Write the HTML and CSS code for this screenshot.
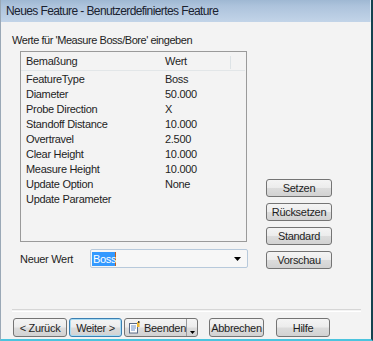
FILE: index.html
```html
<!DOCTYPE html>
<html>
<head>
<meta charset="utf-8">
<link rel="stylesheet" href="styles.css">
</head>
<body>
<div class="window">
  <div class="titlebar">Neues Feature - Benutzerdefiniertes Feature</div>
  <div class="client">
    <div class="prompt">Werte für 'Measure Boss/Bore' eingeben</div>
    <div class="main">
      <div class="left">
        <div class="listbox">
          <div class="lhead">
            <span class="c1">Bemaßung</span><span class="c2">Wert</span><span class="hdiv"></span>
          </div>
          <div class="row"><span class="c1">FeatureType</span><span class="c2">Boss</span></div>
          <div class="row"><span class="c1">Diameter</span><span class="c2">50.000</span></div>
          <div class="row"><span class="c1">Probe Direction</span><span class="c2">X</span></div>
          <div class="row"><span class="c1">Standoff Distance</span><span class="c2">10.000</span></div>
          <div class="row"><span class="c1">Overtravel</span><span class="c2">2.500</span></div>
          <div class="row"><span class="c1">Clear Height</span><span class="c2">10.000</span></div>
          <div class="row"><span class="c1">Measure Height</span><span class="c2">10.000</span></div>
          <div class="row"><span class="c1">Update Option</span><span class="c2">None</span></div>
          <div class="row"><span class="c1">Update Parameter</span><span class="c2"></span></div>
        </div>
        <div class="newval">
          <span class="nlabel">Neuer Wert</span>
          <div class="combo">
            <span class="sel">Boss</span>
            <svg class="arrow" width="7" height="4" viewBox="0 0 7 4"><path d="M0 0H7L3.5 4Z" fill="#000"/></svg>
          </div>
        </div>
      </div>
      <div class="right">
        <div class="btn side">Setzen</div>
        <div class="btn side">Rücksetzen</div>
        <div class="btn side">Standard</div>
        <div class="btn side">Vorschau</div>
      </div>
    </div>
    <div class="sep"></div>
    <div class="footer">
      <div class="btn f1">&lt; Zurück</div>
      <div class="btn f2 focus">Weiter &gt;</div>
      <div class="btn split">
        <span class="smain">
          <svg class="ico" width="13" height="13" viewBox="0 0 13 13">
            <rect x="1.5" y="2.5" width="8" height="9.5" fill="#fff" stroke="#5a6a85"/>
            <path d="M3 5h5M3 7h5M3 9h4" stroke="#6b8fc8" stroke-width="1"/>
            <rect x="9" y="1" width="2.5" height="5" fill="#f0b830"/>
            <rect x="10" y="0" width="1.5" height="2" fill="#404040"/>
          </svg>
          <span>Beenden</span>
        </span>
        <span class="sarrow"><svg width="5" height="3" viewBox="0 0 5 3"><path d="M0 0H5L2.5 3Z" fill="#000"/></svg></span>
      </div>
      <div class="btn f4">Abbrechen</div>
      <div class="btn f5">Hilfe</div>
    </div>
  </div>
</div>
</body>
</html>
```

FILE: styles.css
```css
html, body {
  margin: 0;
  padding: 0;
  background: #f3f3f3;
}
.window {
  width: 373px;
  height: 341px;
  box-sizing: border-box;
  display: flex;
  flex-direction: column;
  border-left: 1px solid #9aa8b6;
  border-right: 2px solid #15424f;
  border-bottom: 2px solid #4cc4de;
  font-family: "Liberation Sans", Arial, sans-serif;
  font-size: 11px;
  letter-spacing: -0.3px;
  color: #1e1e1e;
  overflow: hidden;
}
.titlebar {
  height: 22px;
  line-height: 23px;
  padding-left: 5px;
  font-size: 12px;
  letter-spacing: -0.6px;
  color: #1a2230;
  background: linear-gradient(#9fb8d3 0px, #adc3dc 6px, #c2d4e8 22px);
  border-right: 1px solid #d8e6f2;
}
.client {
  flex: 1;
  display: flex;
  flex-direction: column;
  background: #f3f3f3;
}
.prompt {
  margin: 12px 0 0 11px;
  height: 13px;
  line-height: 13px;
  letter-spacing: -0.45px;
}
.main {
  display: flex;
  margin: 4px 0 0 19px;
}
.left {
  display: flex;
  flex-direction: column;
}
.listbox {
  width: 227px;
  height: 191px;
  box-sizing: border-box;
  border: 1px solid #9a9a9a;
  background: #f3f3f3;
  padding-top: 1px;
}
.lhead {
  display: flex;
  align-items: center;
  height: 17px;
  line-height: 17px;
  margin-right: 1px;
  border-bottom: 1px solid #e2e6e8;
  position: relative;
}
.hdiv {
  position: absolute;
  left: 209px;
  top: 3px;
  width: 1px;
  height: 13px;
  background: #dde3e6;
}
.row {
  display: flex;
  height: 15px;
  line-height: 15px;
}
.c1 {
  width: 144px;
  padding-left: 5px;
  box-sizing: border-box;
  flex: none;
}
.c2 {
  flex: none;
}
.lhead + .row {
  margin-top: 1px;
}
.newval {
  display: flex;
  align-items: center;
  margin-top: 7px;
  height: 19px;
}
.nlabel {
  width: 70px;
  flex: none;
}
.combo {
  width: 158px;
  height: 19px;
  box-sizing: border-box;
  border: 1px solid #b7c9db;
  border-radius: 2px;
  background: #f7f7f7;
  display: flex;
  align-items: center;
  justify-content: space-between;
  padding: 0 6px 0 1px;
}
.sel {
  background: #3399ff;
  color: #fff;
  line-height: 14px;
  height: 14px;
  padding: 0 1px;
  width: 21px;
  border-right: 1px solid #c06020;
}
.arrow {
  display: block;
}
.right {
  display: flex;
  flex-direction: column;
  gap: 6px;
  margin-left: 18px;
  padding-top: 128px;
}
.btn {
  box-sizing: border-box;
  height: 18px;
  border: 1px solid #747474;
  border-radius: 3px;
  background: linear-gradient(#f4f4f4 0%, #ececec 48%, #dcdcdc 52%, #d2d2d2 100%);
  display: flex;
  align-items: center;
  justify-content: center;
  line-height: 14px;
  color: #1e1e1e;
}
.side {
  width: 66px;
}
.sep {
  margin: 40px 0 0 11px;
  width: 349px;
  height: 1px;
  border-top: 1px solid #d6d6d6;
  border-bottom: 1px solid #ffffff;
}
.footer {
  display: flex;
  margin: 6px 0 0 12px;
}
.footer .btn {
  height: 19px;
}
.f1 { width: 54px; }
.f2 { width: 53px; margin-left: 2px; }
.focus {
  border-color: #3c7fb1;
  box-shadow: inset 0 0 0 1px #a8dcf4;
}
.split {
  width: 74px;
  margin-left: 2px;
  justify-content: flex-start;
  padding: 0;
}
.smain {
  display: flex;
  align-items: center;
  gap: 3px;
  padding-left: 3px;
  width: 62px;
  flex: none;
  height: 100%;
  box-sizing: border-box;
  border-right: 1px solid #9a9a9a;
}
.ico {
  display: block;
  flex: none;
}
.sarrow {
  flex: 1;
  height: 100%;
  display: flex;
  justify-content: center;
  align-items: flex-end;
  padding-bottom: 2px;
  box-sizing: border-box;
}
.sarrow svg { display: block; }
.f4 { width: 55px; margin-left: 11px; }
.f5 { width: 54px; margin-left: 12px; }
```
